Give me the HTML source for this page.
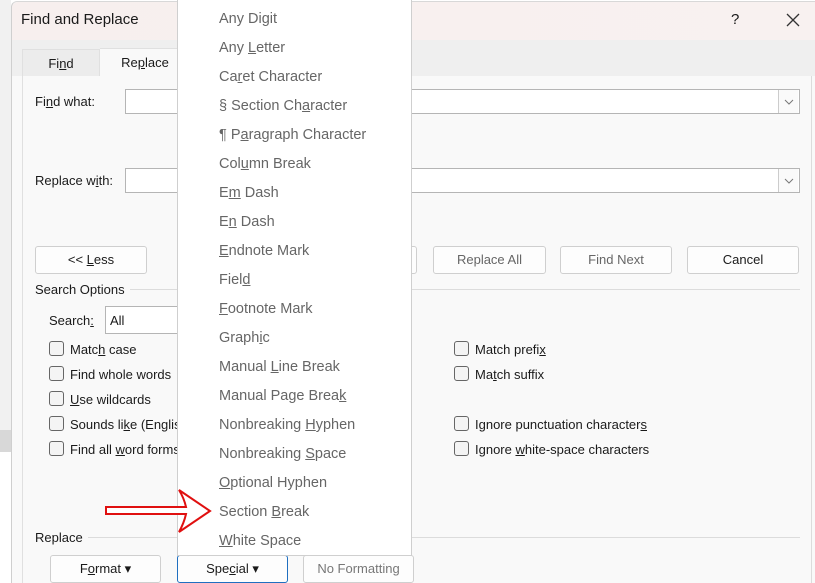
<!DOCTYPE html>
<html><head><meta charset="utf-8"><style>
*{box-sizing:border-box;margin:0;padding:0}
body{width:815px;height:583px;overflow:hidden;background:#fff;font-family:"Liberation Sans",sans-serif;font-size:13px;color:#1a1a1a;position:relative}
.a{position:absolute}
.dlg{left:11px;top:1px;width:804px;height:582px;background:#f9f9f9;border-left:1px solid #cfcfcf;border-top:1px solid #d8d8d8;border-top-left-radius:6px}
.title{left:12px;top:2px;width:803px;height:38px;background:linear-gradient(90deg,#f7efee,#f8f1f0);border-top-left-radius:6px}
.tabbar{left:12px;top:40px;width:803px;height:36px;background:#efefef}
.panel{left:22px;top:76px;width:790px;height:507px;background:#f9f9f9;border-left:1px solid #e0e0e0;border-right:1px solid #dcdcdc}
.inp{background:#fff;border:1px solid #b5b5b5;height:25px}
.dd{width:20px;height:23px;border-left:1px solid #ccc;background:#fafafa}
.btn{background:#fdfdfd;border:1px solid #cfcfcf;border-radius:3px;height:28px;text-align:center;line-height:26px;font-size:13px}
.cb{width:15px;height:15px;border:1px solid #666;border-radius:3px;background:#f4f4f4}
u{text-decoration:underline}
.menu{left:177px;top:0;width:235px;height:556px;background:#fff;border:1px solid #cfcfcf;border-top:none}
.mi{position:absolute;left:41px;font-size:14.5px;color:#666;white-space:nowrap}
.line{height:1px;background:#dcdcdc}
</style></head><body>
<div class="a" style="left:0;top:0;width:11px;height:430px;background:#f1f1f1"></div>
<div class="a" style="left:0;top:430px;width:11px;height:22px;background:#d8d8d8"></div>
<div class="a dlg"></div>
<div class="a title"></div>
<div class="a" style="left:21px;top:11px;font-size:15px">Find and Replace</div>
<div class="a" style="left:731px;top:11px;font-size:15px">?</div>
<svg class="a" style="left:786px;top:13px" width="14" height="14"><path d="M1,1 L13,13 M13,1 L1,13" stroke="#333" stroke-width="1.3"/></svg>
<div class="a tabbar"></div>
<div class="a" style="left:22px;top:49px;width:78px;height:27px;background:#ececec;border:1px solid #e0e0e0;border-bottom:none;text-align:center;line-height:27px">Fi<u>n</u>d</div>
<div class="a" style="left:100px;top:48px;width:90px;height:29px;background:#f9f9f9;border-top:1px solid #e0e0e0;text-align:center;line-height:28px">Re<u>p</u>lace</div>
<div class="a panel"></div>
<div class="a" style="left:35px;top:94px">Fi<u>n</u>d what:</div>
<div class="a inp" style="left:125px;top:89px;width:675px"></div>
<div class="a dd" style="left:778px;top:90px"><svg width="20" height="23"><path d="M6,10 L10,14 L14,10" fill="none" stroke="#777" stroke-width="1"/></svg></div>
<div class="a" style="left:35px;top:173px">Replace w<u>i</u>th:</div>
<div class="a inp" style="left:125px;top:168px;width:675px"></div>
<div class="a dd" style="left:778px;top:169px"><svg width="20" height="23"><path d="M6,10 L10,14 L14,10" fill="none" stroke="#777" stroke-width="1"/></svg></div>
<div class="a btn" style="left:35px;top:246px;width:112px">&lt;&lt; <u>L</u>ess</div>
<div class="a btn" style="left:300px;top:246px;width:117px"></div>
<div class="a btn" style="left:433px;top:246px;width:113px;color:#666">Replace All</div>
<div class="a btn" style="left:560px;top:246px;width:112px;color:#666">Find Next</div>
<div class="a btn" style="left:687px;top:246px;width:112px">Cancel</div>
<div class="a" style="left:35px;top:282px">Search Options</div>
<div class="a line" style="left:130px;top:289px;width:670px"></div>
<div class="a" style="left:49px;top:313px">Search<u>:</u></div>
<div class="a inp" style="left:105px;top:306px;width:90px;height:28px;padding:6px 4px">All</div>
<div class="a cb" style="left:49px;top:341px"></div><div class="a" style="left:70px;top:342px">Matc<u>h</u> case</div>
<div class="a cb" style="left:49px;top:366px"></div><div class="a" style="left:70px;top:367px">Find whole words</div>
<div class="a cb" style="left:49px;top:391px"></div><div class="a" style="left:70px;top:392px"><u>U</u>se wildcards</div>
<div class="a cb" style="left:49px;top:416px"></div><div class="a" style="left:70px;top:417px">Sounds li<u>k</u>e (English)</div>
<div class="a cb" style="left:49px;top:441px"></div><div class="a" style="left:70px;top:442px">Find all <u>w</u>ord forms</div>
<div class="a cb" style="left:454px;top:341px"></div><div class="a" style="left:475px;top:342px">Match prefi<u>x</u></div>
<div class="a cb" style="left:454px;top:366px"></div><div class="a" style="left:475px;top:367px">Ma<u>t</u>ch suffix</div>
<div class="a cb" style="left:454px;top:416px"></div><div class="a" style="left:475px;top:417px">Ignore punctuation character<u>s</u></div>
<div class="a cb" style="left:454px;top:441px"></div><div class="a" style="left:475px;top:442px">Ignore <u>w</u>hite-space characters</div>
<div class="a" style="left:35px;top:530px">Replace</div>
<div class="a line" style="left:88px;top:537px;width:712px"></div>
<div class="a btn" style="left:50px;top:555px;width:111px">F<u>o</u>rmat ▾</div>
<div class="a btn" style="left:177px;top:555px;width:111px;border-color:#1f6fc0">Spe<u>c</u>ial ▾</div>
<div class="a btn" style="left:303px;top:555px;width:111px;color:#777">No Formatting</div>
<div class="a menu">
<div class="mi" style="top:11px">Any Di<u>g</u>it</div>
<div class="mi" style="top:40px">Any <u>L</u>etter</div>
<div class="mi" style="top:69px">Ca<u>r</u>et Character</div>
<div class="mi" style="top:98px">§ Section Ch<u>a</u>racter</div>
<div class="mi" style="top:127px">¶ P<u>a</u>ragraph Character</div>
<div class="mi" style="top:156px">Col<u>u</u>mn Break</div>
<div class="mi" style="top:185px">E<u>m</u> Dash</div>
<div class="mi" style="top:214px">E<u>n</u> Dash</div>
<div class="mi" style="top:243px"><u>E</u>ndnote Mark</div>
<div class="mi" style="top:272px">Fiel<u>d</u></div>
<div class="mi" style="top:301px"><u>F</u>ootnote Mark</div>
<div class="mi" style="top:330px">Graph<u>i</u>c</div>
<div class="mi" style="top:359px">Manual <u>L</u>ine Break</div>
<div class="mi" style="top:388px">Manual Page Brea<u>k</u></div>
<div class="mi" style="top:417px">Nonbreaking <u>H</u>yphen</div>
<div class="mi" style="top:446px">Nonbreaking <u>S</u>pace</div>
<div class="mi" style="top:475px"><u>O</u>ptional Hyphen</div>
<div class="mi" style="top:504px">Section <u>B</u>reak</div>
<div class="mi" style="top:533px"><u>W</u>hite Space</div>
</div>
<svg class="a" style="left:0;top:0" width="815" height="583"><path d="M106,507 L186,507 Q184,498 179,490 L210,511 L179,532 Q184,523 186,514 L106,514 Z" fill="#fff" stroke="#e01010" stroke-width="2"/></svg>
</body></html>
